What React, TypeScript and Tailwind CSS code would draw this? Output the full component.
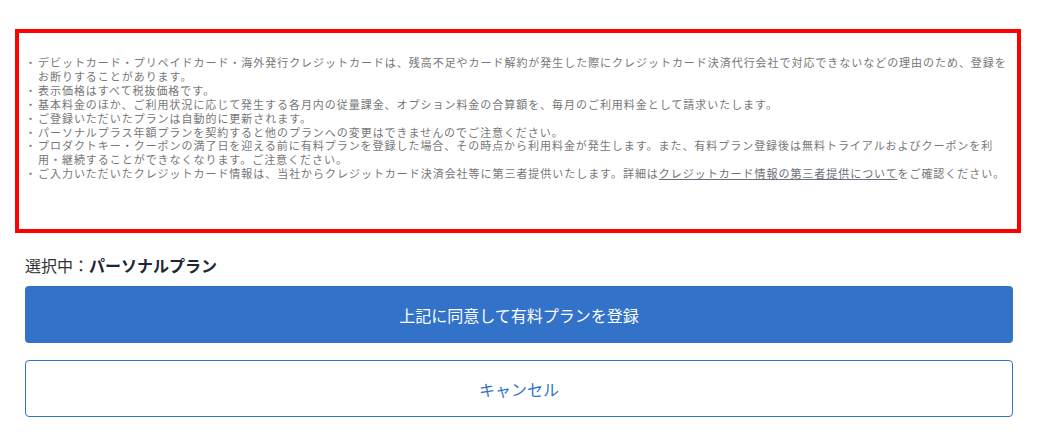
import React from "react";

const font = { fontFamily: '"Noto Sans CJK JP", "Noto Sans", sans-serif' };

function Item({ lines }: { lines: React.ReactNode[] }) {
  return (
    <li className="flex">
      <span className="w-[13px] shrink-0">・</span>
      <span className="flex flex-col">
        {lines.map((l, i) => (
          <span key={i} className="whitespace-nowrap">
            {l}
          </span>
        ))}
      </span>
    </li>
  );
}

export default function App() {
  return (
    <div className="w-[1043px] h-[439px] bg-white overflow-hidden pt-[29px]" style={font}>
      <div className="ml-[15px] w-[1006px] h-[204px] border-4 border-[#ff0000] pt-[23px] pl-[6px]">
        <ul className="text-[11px] leading-[13.9px] tracking-[0.96px] text-[#777777]">
          <Item
            lines={[
              "デビットカード・プリペイドカード・海外発行クレジットカードは、残高不足やカード解約が発生した際にクレジットカード決済代行会社で対応できないなどの理由のため、登録を",
              "お断りすることがあります。",
            ]}
          />
          <Item lines={["表示価格はすべて税抜価格です。"]} />
          <Item
            lines={[
              "基本料金のほか、ご利用状況に応じて発生する各月内の従量課金、オプション料金の合算額を、毎月のご利用料金として請求いたします。",
            ]}
          />
          <Item lines={["ご登録いただいたプランは自動的に更新されます。"]} />
          <Item
            lines={["パーソナルプラス年額プランを契約すると他のプランへの変更はできませんのでご注意ください。"]}
          />
          <Item
            lines={[
              "プロダクトキー・クーポンの満了日を迎える前に有料プランを登録した場合、その時点から利用料金が発生します。また、有料プラン登録後は無料トライアルおよびクーポンを利",
              "用・継続することができなくなります。ご注意ください。",
            ]}
          />
          <Item
            lines={[
              <>
                ご入力いただいたクレジットカード情報は、当社からクレジットカード決済会社等に第三者提供いたします。詳細は
                <a className="underline text-[#6b6f7a]" href="#">
                  クレジットカード情報の第三者提供について
                </a>
                をご確認ください。
              </>,
            ]}
          />
        </ul>
      </div>
      <div className="ml-[25px] w-[988px]">
        <p className="mt-[22px] text-[16px] leading-[20px] text-[#333333]">
          選択中：<span className="font-bold text-[#222633]">パーソナルプラン</span>
        </p>
        <button className="mt-[11px] w-full h-[57px] rounded-[4px] bg-[#3272c8] text-white text-[16px] flex items-center justify-center">
          上記に同意して有料プランを登録
        </button>
        <button className="mt-[17px] w-full h-[57px] rounded-[4px] border border-[#3272c8] bg-white text-[#3272c8] text-[16px] flex items-center justify-center">
          キャンセル
        </button>
      </div>
    </div>
  );
}
